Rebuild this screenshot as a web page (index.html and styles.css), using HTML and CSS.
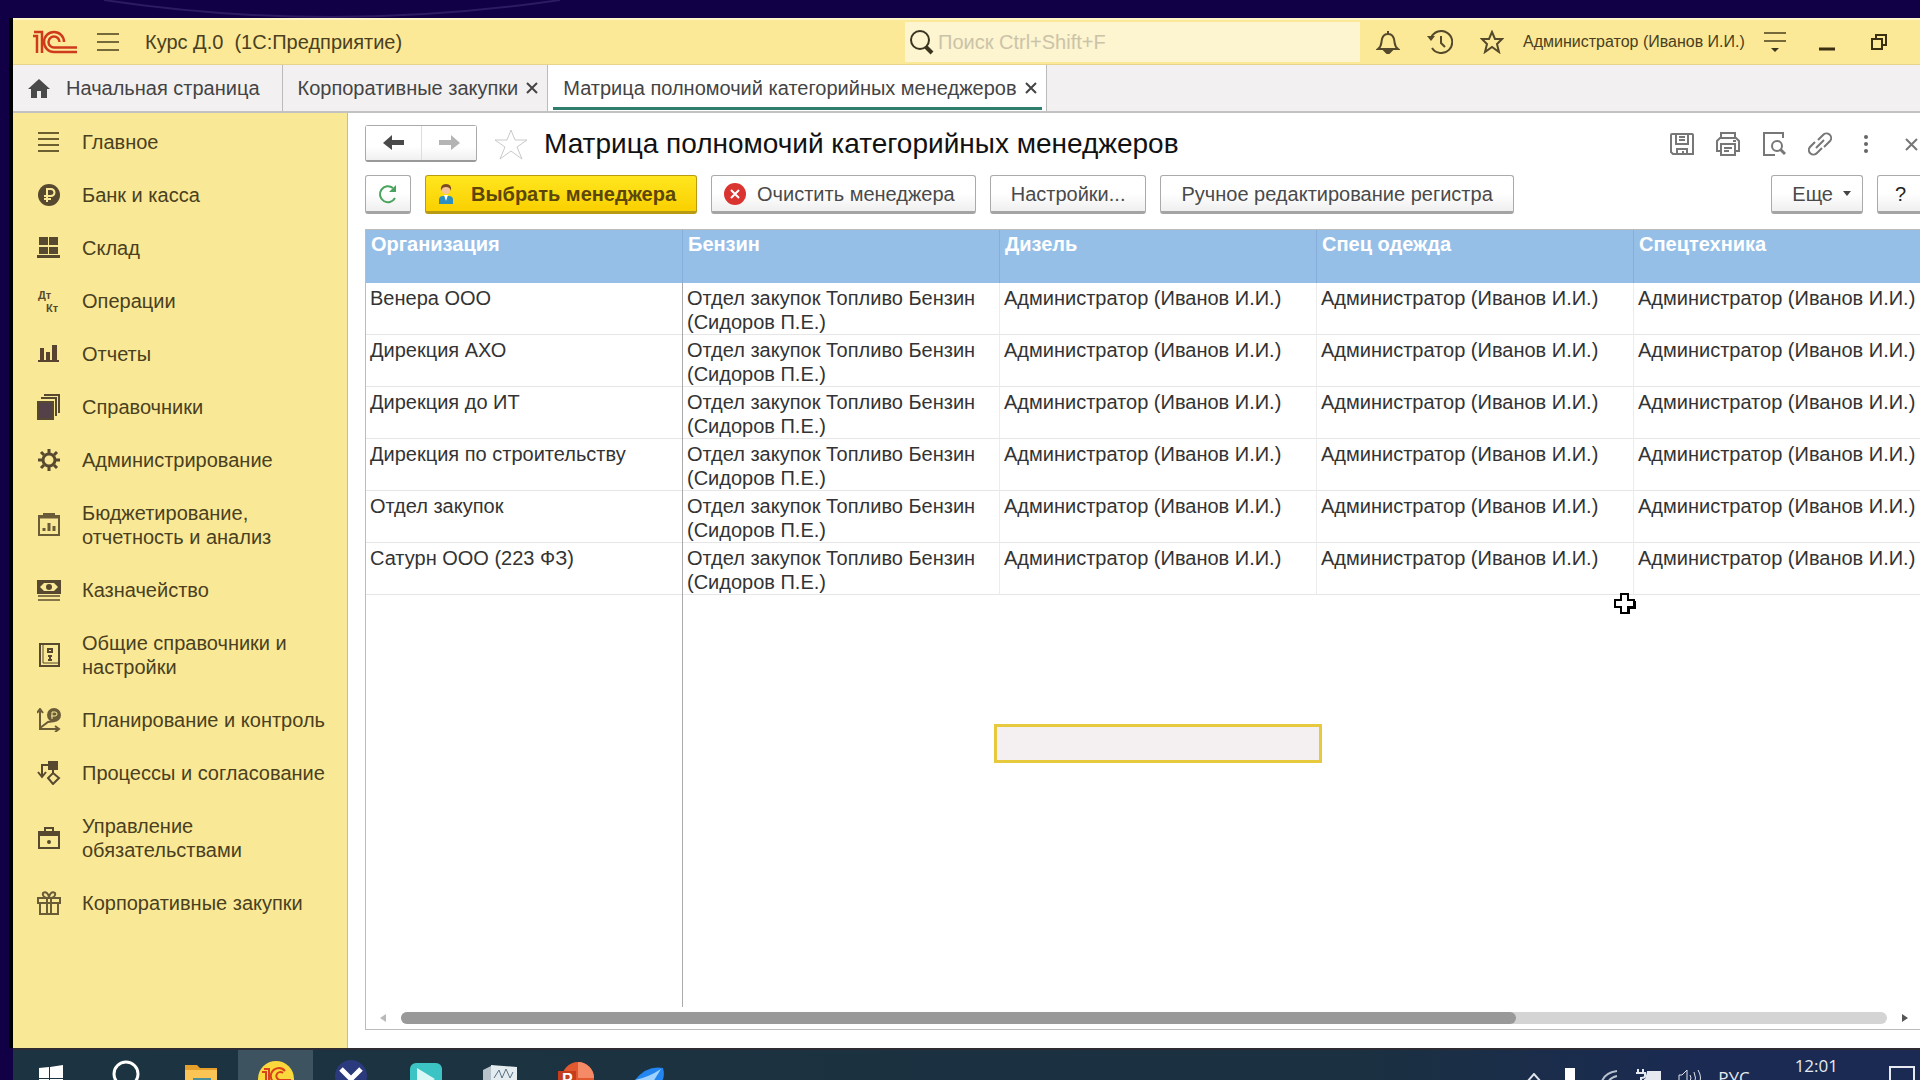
FILE: index.html
```html
<!DOCTYPE html>
<html lang="ru">
<head>
  <meta charset="UTF-8">
  <meta name="viewport" content="width=device-width, initial-scale=1.0">
  <title>Матрица полномочий категорийных менеджеров</title>
  <link rel="stylesheet" href="styles.css">
</head>
<body>

  <svg class="backdrop" width="700" height="18" viewBox="0 0 700 18" fill="none" stroke="#2c1a63" stroke-width="2">
    <path d="M104 0Q330 34 560 0"/>
  </svg>

  <div class="window">

    <header class="titlebar">
      <svg class="logo" width="44" height="24" viewBox="0 0 44 24" fill="none" stroke="#cf3a1c" stroke-width="2.5">
        <path d="M0 6H4V23M1 2H9V23"/>
        <path d="M44 22H21A10 10 0 1 1 31 12"/>
        <path d="M44 17.500H21A5.500 5.500 0 1 1 26.500 12"/>
      </svg>
      <button class="icon-btn menu-btn" aria-label="Меню">
        <svg width="22" height="20" viewBox="0 0 22 20" stroke="#776a3a" stroke-width="2"><path d="M0 2H22M0 10H22M0 18H22"/></svg>
      </button>
      <div class="app-title">Курс Д.0&nbsp; (1С:Предприятие)</div>

      <label class="search">
        <svg width="25" height="25" viewBox="0 0 25 25" fill="none" stroke="#3b3520"><circle cx="11" cy="10" r="9" stroke-width="2"/><path d="M17 17L23 23" stroke-width="4"/></svg>
        <input type="text" placeholder="Поиск Ctrl+Shift+F" aria-label="Поиск">
      </label>

      <div class="title-tools">
        <button class="icon-btn" aria-label="Уведомления">
          <svg width="24" height="24" viewBox="0 0 24 24" fill="none" stroke="#54492a" stroke-width="2"><path d="M12 1V4M2 19C6 16 5 13 6 9C7 5 9 4 12 4S17 5 18 9C19 13 18 16 22 19Z"/><path d="M9 21H15L12 24Z" fill="#54492a"/></svg>
        </button>
        <button class="icon-btn" aria-label="История">
          <svg width="26" height="24" viewBox="0 0 26 24" fill="none" stroke="#54492a" stroke-width="2"><path d="M4 8A11 11 0 1 1 5 18M14 6V13L18 17"/><path d="M0 6L8 6L4 11Z" fill="#54492a" stroke="none"/></svg>
        </button>
        <button class="icon-btn" aria-label="Избранное">
          <svg width="24" height="24" viewBox="0 0 24 24" fill="none" stroke="#54492a" stroke-width="2"><path d="M12 2L15 9H22L17 14L19 22L12 17L5 22L7 14L2 9H9Z"/></svg>
        </button>
        <a class="user" href="#">Администратор (Иванов И.И.)</a>
        <button class="icon-btn service" aria-label="Сервис">
          <svg width="22" height="22" viewBox="0 0 22 22" stroke="#776a3a" stroke-width="2"><path d="M0 2H22M0 10H22"/><path d="M7 17H15L11 21Z" fill="#3b3520" stroke="none"/></svg>
        </button>
        <button class="icon-btn minimize" aria-label="Свернуть">
          <svg width="16" height="20" viewBox="0 0 16 20" stroke="#3b2f12" stroke-width="3"><path d="M0 17H16"/></svg>
        </button>
        <button class="icon-btn restore" aria-label="Восстановить">
          <svg width="16" height="16" viewBox="0 0 16 16" fill="none" stroke="#3b2f12" stroke-width="2"><path d="M1 5H11V15H1ZM5 5V1H15V11H11"/></svg>
        </button>
      </div>
    </header>

    <nav class="tabs">
      <a class="tab home" href="#">
        <svg width="22" height="19" viewBox="0 0 22 19" fill="#4a4a4a"><path d="M11 0L22 10H19V19H13V12H9V19H3V10H0Z"/></svg>
        Начальная страница
      </a>
      <a class="tab" href="#">Корпоративные закупки
        <svg width="12" height="12" viewBox="0 0 12 12" stroke="#444" stroke-width="2"><path d="M1 1L11 11M11 1L1 11"/></svg>
      </a>
      <a class="tab active" href="#">Матрица полномочий категорийных менеджеров
        <svg width="12" height="12" viewBox="0 0 12 12" stroke="#444" stroke-width="2"><path d="M1 1L11 11M11 1L1 11"/></svg>
      </a>
    </nav>

    <div class="workspace">
      <nav class="sidebar">
        <a href="#">
          <svg width="24" height="24" viewBox="0 0 24 24" stroke="#6b5f30" stroke-width="2"><path d="M1 3H22M1 9H22M1 15H22M1 21H22"/></svg>
          <span>Главное</span>
        </a>
        <a href="#">
          <svg width="24" height="24" viewBox="0 0 24 24" fill="none"><circle cx="12" cy="12" r="11" fill="#57492f"/><path d="M10 19V6H14A3 3 0 0 1 14 13H7M7 16H14" stroke="#f9e997" stroke-width="2"/></svg>
          <span>Банк и касса</span>
        </a>
        <a href="#">
          <svg width="24" height="24" viewBox="0 0 24 24" fill="#57492f"><path d="M2 1H11V9H2ZM12 1H21V9H12ZM2 11H11V18H2ZM12 11H21V18H12ZM0 19H23V22H0Z"/></svg>
          <span>Склад</span>
        </a>
        <a href="#">
          <svg class="dtkt" width="24" height="24" viewBox="0 0 24 24" fill="#57492f"><text x="1" y="10">Дт</text><text x="9" y="23">Кт</text></svg>
          <span>Операции</span>
        </a>
        <a href="#">
          <svg width="24" height="24" viewBox="0 0 24 24" fill="#57432f"><path d="M1 18H22V20H1ZM3 6H7V18H3ZM9 10H13V18H9ZM15 3H20V18H15Z"/></svg>
          <span>Отчеты</span>
        </a>
        <a href="#">
          <svg width="24" height="26" viewBox="0 0 24 26" fill="none" stroke="#57492f" stroke-width="2"><path d="M1 8H16V25H1Z" fill="#544048"/><path d="M4 4H19V22M7 1H22V19"/></svg>
          <span>Справочники</span>
        </a>
        <a href="#">
          <svg width="24" height="24" viewBox="0 0 24 24" fill="none" stroke="#57492f"><circle cx="12" cy="12" r="6" stroke-width="3"/><path d="M12 1V5M12 19V23M1 12H5M19 12H23M4 4L7 7M17 17L20 20M4 20L7 17M17 7L20 4" stroke-width="3"/></svg>
          <span>Администрирование</span>
        </a>
        <a href="#">
          <svg width="24" height="24" viewBox="0 0 24 24" fill="none" stroke="#6b5c38" stroke-width="2"><path d="M2 3H22V22H2Z"/><path d="M1 4H23" stroke-width="3"/><path d="M6 1H18M7 18V15M12 18V10M17 18V13" stroke-width="3"/></svg>
          <span>Бюджетирование, отчетность и анализ</span>
        </a>
        <a href="#">
          <svg width="24" height="24" viewBox="0 0 24 24" fill="none" stroke="#57492f" stroke-width="2"><path d="M1 3H23V15H1Z" fill="#57492f"/><path d="M7 5H17L21 9L17 13H7L3 9Z" fill="#f9e997" stroke="none"/><circle cx="12" cy="9" r="3" fill="#57492f" stroke="none"/><path d="M1 18H23M1 22H23" stroke="#85764a"/></svg>
          <span>Казначейство</span>
        </a>
        <a href="#">
          <svg width="24" height="24" viewBox="0 0 24 24" fill="none" stroke="#57492f" stroke-width="2"><path d="M3 1H22V23H3Z"/><path d="M6 1V20H22" stroke-width="1"/><path d="M11 6H15V9H11ZM11 13H15M13 13V17M11 17H15"/></svg>
          <span>Общие справочники и настройки</span>
        </a>
        <a href="#">
          <svg width="24" height="24" viewBox="0 0 24 24" fill="none" stroke="#6b5c38" stroke-width="2"><path d="M3 22V3M0 5L3 1L6 5M2 21H21M18 18L22 21L18 24M3 20L11 14L18 13"/><circle cx="17" cy="7" r="6" fill="#6b5c38"/><path d="M15 11V4H18A2 2 0 0 1 18 8H14" stroke="#f9e997" stroke-width="1"/></svg>
          <span>Планирование и контроль</span>
        </a>
        <a href="#">
          <svg width="24" height="24" viewBox="0 0 24 24" fill="none" stroke="#57492f" stroke-width="2"><path d="M12 1H20V8H12Z" fill="#57492f"/><path d="M12 4H5V15M1 11L5 16L9 11M16 8V12M16 12L22 17L16 23L11 17Z"/></svg>
          <span>Процессы и согласование</span>
        </a>
        <a href="#">
          <svg width="24" height="24" viewBox="0 0 24 24" fill="none" stroke="#57492f" stroke-width="2"><path d="M2 6H22V22H2Z"/><path d="M1 8H23" stroke-width="4"/><path d="M8 5V2H16V5"/><circle cx="12" cy="16" r="1"/></svg>
          <span>Управление обязательствами</span>
        </a>
        <a href="#">
          <svg width="24" height="24" viewBox="0 0 24 24" fill="none" stroke="#6b5c38" stroke-width="2"><path d="M1 7H23V12H1ZM3 12V23H21V12M10 7V23M14 7V23M12 7C9 7 5 6 6 2C9 0 12 3 12 7C12 3 15 0 18 2C19 6 15 7 12 7"/></svg>
          <span>Корпоративные закупки</span>
        </a>
      </nav>

      <main class="content">
        <div class="form-head">
          <div class="history">
            <button aria-label="Назад"><svg width="22" height="16" viewBox="0 0 22 16" fill="#4a4a4a"><path d="M9 0V5H21V10H9V15L0 8Z"/></svg></button>
            <button aria-label="Вперед"><svg width="22" height="16" viewBox="0 0 22 16" fill="#b4b4b4"><path d="M13 0V5H1V10H13V15L22 8Z"/></svg></button>
          </div>
          <button class="icon-btn fav" aria-label="В избранное">
            <svg width="36" height="32" viewBox="0 0 36 32" fill="none" stroke="#c9c9c9" stroke-width="1"><path d="M18 2L22 12H34L24 19L29 31L18 23L7 31L12 19L2 12H14Z"/></svg>
          </button>
          <h1>Матрица полномочий категорийных менеджеров</h1>
          <div class="form-tools">
            <button class="icon-btn" aria-label="Сохранить"><svg width="24" height="24" viewBox="0 0 24 24" fill="none" stroke="#777" stroke-width="2"><path d="M1 3Q1 2 2 2H22Q23 2 23 3V22H3L1 20Z"/><path d="M6 2V12H18V2M9 5H15M9 8H15M7 22V17H17V22M13 19V22"/></svg></button>
            <button class="icon-btn" aria-label="Печать"><svg width="24" height="24" viewBox="0 0 24 24" fill="none" stroke="#777" stroke-width="2"><path d="M5 6V1H19V6M5 19H1V9L4 6H20L23 9V19H19M5 12H19V23H5ZM8 16H16M8 19H13M17 9H20"/></svg></button>
            <button class="icon-btn" aria-label="Просмотр"><svg width="24" height="24" viewBox="0 0 24 24" fill="none" stroke="#777" stroke-width="2"><path d="M21 6V1H2V23H13"/><circle cx="15" cy="14" r="5"/><path d="M18 17L23 22" stroke-width="3"/></svg></button>
            <button class="icon-btn" aria-label="Ссылка"><svg width="24" height="24" viewBox="0 0 24 24" fill="none" stroke="#777" stroke-width="2"><path d="M8 16L16 8M10 8L15 3A4 4 0 0 1 22 9L16 15M14 16L9 21A4 4 0 0 1 2 15L7 10"/></svg></button>
            <button class="icon-btn" aria-label="Ещё действия"><svg width="24" height="24" viewBox="0 0 24 24" fill="#666"><circle cx="12" cy="5" r="2"/><circle cx="12" cy="12" r="2"/><circle cx="12" cy="19" r="2"/></svg></button>
            <button class="icon-btn" aria-label="Закрыть"><svg width="24" height="24" viewBox="0 0 24 24" stroke="#777" stroke-width="2"><path d="M6 7L17 18M17 7L6 18"/></svg></button>
          </div>
        </div>

        <div class="toolbar">
          <button class="btn square" aria-label="Обновить">
            <svg width="20" height="20" viewBox="0 0 20 20" fill="none" stroke="#4aa35c" stroke-width="2"><path d="M17 14A8 8 0 1 1 15 4"/><path d="M18 1V8H11Z" fill="#4aa35c" stroke="none"/></svg>
          </button>
          <button class="btn primary">
            <svg width="16" height="22" viewBox="0 0 16 22"><path d="M1 21V17Q1 13 5 13H11Q15 13 15 17V21Z" fill="#2b8fc0"/><path d="M6 12H10L8 18Z" fill="#fff"/><circle cx="8" cy="7" r="4" fill="#f6c49a"/><path d="M3 8Q2 1 8 1T13 8Q12 4 8 4T3 8Z" fill="#7a4a22"/></svg>
            Выбрать менеджера
          </button>
          <button class="btn clear">
            <svg width="24" height="24" viewBox="0 0 24 24"><circle cx="12" cy="12" r="11" fill="#d9342f"/><path d="M8 8L16 16M16 8L8 16" stroke="#fff" stroke-width="2"/></svg>
            Очистить менеджера
          </button>
          <button class="btn">Настройки...</button>
          <button class="btn">Ручное редактирование регистра</button>
          <button class="btn more">Еще
            <svg width="8" height="5" viewBox="0 0 8 5" fill="#444"><path d="M0 0H8L4 5Z"/></svg>
          </button>
          <button class="btn help">?</button>
        </div>

        <div class="sheet">
          <div class="sheet-view">
            <table>
              <thead>
                <tr><th>Организация</th><th>Бензин</th><th>Дизель</th><th>Спец одежда</th><th>Спецтехника</th></tr>
              </thead>
              <tbody>
                <tr><td>Венера ООО</td><td>Отдел закупок Топливо Бензин (Сидоров П.Е.)</td><td>Администратор (Иванов И.И.)</td><td>Администратор (Иванов И.И.)</td><td>Администратор (Иванов И.И.)</td></tr>
                <tr><td>Дирекция АХО</td><td>Отдел закупок Топливо Бензин (Сидоров П.Е.)</td><td>Администратор (Иванов И.И.)</td><td>Администратор (Иванов И.И.)</td><td>Администратор (Иванов И.И.)</td></tr>
                <tr><td>Дирекция до ИТ</td><td>Отдел закупок Топливо Бензин (Сидоров П.Е.)</td><td>Администратор (Иванов И.И.)</td><td>Администратор (Иванов И.И.)</td><td>Администратор (Иванов И.И.)</td></tr>
                <tr><td>Дирекция по строительству</td><td>Отдел закупок Топливо Бензин (Сидоров П.Е.)</td><td>Администратор (Иванов И.И.)</td><td>Администратор (Иванов И.И.)</td><td>Администратор (Иванов И.И.)</td></tr>
                <tr><td>Отдел закупок</td><td>Отдел закупок Топливо Бензин (Сидоров П.Е.)</td><td>Администратор (Иванов И.И.)</td><td>Администратор (Иванов И.И.)</td><td>Администратор (Иванов И.И.)</td></tr>
                <tr><td>Сатурн ООО (223 ФЗ)</td><td>Отдел закупок Топливо Бензин (Сидоров П.Е.)</td><td>Администратор (Иванов И.И.)</td><td>Администратор (Иванов И.И.)</td><td>Администратор (Иванов И.И.)</td></tr>
              </tbody>
            </table>
            <div class="selected-cell"></div>
            <svg class="pointer" width="24" height="24" viewBox="0 0 24 24" fill="#fff" stroke="#000" stroke-width="2"><path d="M8 2H15V8H21V15H15V21H8V15H2V8H8Z"/><path d="M16 22V16H22V9" fill="none"/></svg>
          </div>
          <div class="scrollbar">
            <svg width="6" height="8" viewBox="0 0 6 8" fill="#b9b9b9"><path d="M6 0V8L0 4Z"/></svg>
            <div class="track"><div class="thumb"></div></div>
            <svg width="6" height="8" viewBox="0 0 6 8" fill="#555"><path d="M0 0V8L6 4Z"/></svg>
          </div>
        </div>
      </main>
    </div>
  </div>

  <footer class="taskbar">
    <button class="task" aria-label="Пуск"><svg width="40" height="40" viewBox="0 0 40 40" fill="#fff"><path d="M8 8L18 7V18H8ZM19 7L32 5V18H19ZM8 19H18V30L8 29ZM19 19H32V32L19 30Z"/></svg></button>
    <button class="task" aria-label="Поиск"><svg width="40" height="40" viewBox="0 0 40 40" fill="none" stroke="#fff" stroke-width="3"><circle cx="20" cy="14" r="12"/></svg></button>
    <button class="task" aria-label="Проводник"><svg width="40" height="40" viewBox="0 0 40 40"><path d="M4 5H16L19 8H36V30H4Z" fill="#e5a02c"/><path d="M4 10H36V30H4Z" fill="#fbc555"/><path d="M12 18H30V30H12Z" fill="#4b8f9a"/></svg></button>
    <button class="task current" aria-label="1С:Предприятие"><svg width="40" height="40" viewBox="0 0 40 40"><circle cx="20" cy="19" r="18" fill="#fbd93c"/><path d="M6 12H10V24M8 9H13V24M35 24H24A8 8 0 1 1 29 11M35 20H24A4 4 0 1 1 27 13" fill="none" stroke="#d9421c" stroke-width="2"/></svg></button>
    <button class="task" aria-label="Помощник"><svg width="40" height="40" viewBox="0 0 40 40"><circle cx="20" cy="16" r="16" fill="#2b3a7c"/><path d="M10 9L20 19L30 9" fill="none" stroke="#fff" stroke-width="5"/></svg></button>
    <button class="task" aria-label="Плеер"><svg width="40" height="40" viewBox="0 0 40 40"><rect x="4" y="3" width="32" height="32" rx="6" fill="#3cc4c4"/><path d="M11 8L29 19L11 30Z" fill="#d9f7f4"/></svg></button>
    <button class="task" aria-label="Монитор"><svg width="40" height="40" viewBox="0 0 40 40"><path d="M2 10L12 5V36H2Z" fill="#b7c3cb"/><path d="M10 5L36 7V34L10 32Z" fill="#e4ecf0"/><path d="M13 18L18 10L21 18L25 9L29 18L32 12" fill="none" stroke="#587387" stroke-width="1"/></svg></button>
    <button class="task" aria-label="PowerPoint"><svg class="ppt" width="40" height="40" viewBox="0 0 40 40"><circle cx="22" cy="18" r="16" fill="#e2582f"/><path d="M22 2A16 16 0 0 1 38 18H22Z" fill="#f58a66"/><rect x="2" y="11" width="18" height="18" fill="#c43e1c"/><text x="6" y="25" fill="#fff">P</text></svg></button>
    <button class="task" aria-label="Почта"><svg width="40" height="40" viewBox="0 0 40 40"><path d="M4 20Q16 5 32 8Q36 22 22 30Z" fill="#2385f0"/><path d="M4 20Q18 17 30 9L22 22Z" fill="#9fd2ff"/></svg></button>

    <div class="tray">
      <svg width="16" height="10" viewBox="0 0 16 10" fill="none" stroke="#dfe3ea" stroke-width="2"><path d="M1 9L8 1L15 9"/></svg>
      <svg class="mic" width="16" height="20" viewBox="0 0 16 20" fill="#fff"><path d="M3 0H13V14H16L8 20L0 14H3Z"/></svg>
      <svg width="20" height="16" viewBox="0 0 20 16" fill="none" stroke="#b9c2cf" stroke-width="2"><path d="M1 16Q2 3 17 1M7 16Q8 8 17 6M12 16Q13 12 17 11"/></svg>
      <svg width="26" height="18" viewBox="0 0 26 18" fill="none" stroke="#e6eaf0" stroke-width="2"><path d="M2 0V3M7 0V3M0 4H9V7Q9 9 5 9V16"/><path d="M11 3H24V14H9V10" fill="#e6eaf0"/></svg>
      <svg width="24" height="18" viewBox="0 0 24 18" fill="none" stroke="#dfe3ea" stroke-width="1"><path d="M1 6H4L9 1V17L4 12H1ZM12 6Q14 9 12 12M16 3Q19 9 16 15M20 1Q25 9 20 17"/></svg>
      <span class="lang">РУС</span>
      <time>12:01</time>
      <svg class="notes" width="26" height="24" viewBox="0 0 26 24" fill="none" stroke="#e6eaf0" stroke-width="2"><path d="M1 1H25V19H17L13 23V19H1Z"/></svg>
    </div>
  </footer>

</body>
</html>
```
FILE: styles.css
```css
* {
  box-sizing: border-box;
}
body {
  margin: 0;
  height: 100vh;
  padding: 18px 0 0 9px;
  display: flex;
  flex-direction: column;
  overflow: hidden;
  background: #120046;
  font-family: "Liberation Sans", Arial, sans-serif;
  font-size: 20px;
  line-height: 24px;
  color: #333;
}
a {
  color: inherit;
  text-decoration: none;
}
button {
  font: inherit;
  color: inherit;
}
svg {
  display: block;
  flex: none;
}
.backdrop {
  position: absolute;
  top: 0;
  left: 0;
}

/* окно программы уходит за правый край экрана */
.window {
  flex: 1;
  min-height: 0;
  margin-right: -29px;
  border-left: 4px solid #000;
  background: #fff;
  display: flex;
  flex-direction: column;
}
.icon-btn {
  padding: 0;
  border: 0;
  background: none;
  display: flex;
  align-items: center;
  justify-content: center;
}

/* заголовок окна */
.titlebar {
  height: 47px;
  padding: 0 30px 0 20px;
  border-top: 2px solid #fff6c8;
  border-bottom: 1px solid #e6d68c;
  background: #fbe998;
  display: flex;
  align-items: center;
  color: #4a4020;
}
.menu-btn {
  margin: 0 26px 0 20px;
}
.search {
  width: 455px;
  height: 40px;
  margin-left: auto;
  padding-left: 4px;
  background: #fdf4d0;
  display: flex;
  align-items: center;
  gap: 4px;
}
.search input {
  flex: 1;
  min-width: 0;
  border: 0;
  padding: 0;
  background: none;
  font: inherit;
}
.search input::placeholder {
  color: #cbc3a8;
  opacity: 1;
}
.title-tools {
  display: flex;
  align-items: center;
  margin-left: 16px;
}
.title-tools .icon-btn {
  width: 24px;
  margin-right: 28px;
}
.title-tools .user {
  width: 224px;
  font-size: 16px;
  white-space: nowrap;
  margin-left: -9px;
  margin-right: 16px;
}

/* вкладки */
.tabs {
  height: 48px;
  background: #f3f0f2;
  border-bottom: 2px solid #c2c2c2;
  display: flex;
}
.tab {
  padding: 0 9px 0 15px;
  border-right: 1px solid #bbb;
  display: flex;
  align-items: center;
  gap: 8px;
  color: #444;
  white-space: nowrap;
}
.tab.home {
  gap: 16px;
  padding-right: 22px;
}
.tab.active {
  background: #fff;
  position: relative;
}
.tab.active::after {
  content: "";
  position: absolute;
  left: 5px;
  right: 4px;
  bottom: 1px;
  height: 3px;
  background: #2f7d6c;
}

.workspace {
  flex: 1;
  min-height: 0;
  display: flex;
}
.sidebar {
  width: 335px;
  flex: none;
  background: #f9e997;
  border-right: 1px solid #c9bd86;
  padding-top: 2px;
}
.sidebar a {
  display: flex;
  align-items: center;
  gap: 21px;
  padding: 15px 20px 14px 24px;
  color: #4a4020;
}
.sidebar svg {
  margin: -2px 0;
}
.dtkt {
  font-size: 11px;
  font-weight: bold;
}

.content {
  flex: 1;
  min-width: 0;
  padding: 12px 0 18px 17px;
  display: flex;
  flex-direction: column;
}
.form-head {
  display: flex;
  align-items: center;
  padding-right: 25px;
}
.history {
  display: flex;
  border: 1px solid #aaa;
  border-bottom: 2px solid #999;
  border-radius: 3px;
}
.history button {
  width: 55px;
  height: 34px;
  padding: 0;
  border: 0;
  background: linear-gradient(#fff 60%, #f0f0f0);
  display: flex;
  align-items: center;
  justify-content: center;
}
.history button + button {
  border-left: 1px solid #ddd;
}
.fav {
  margin: 0 15px 0 16px;
}
h1 {
  margin: 0;
  font-size: 28px;
  line-height: 32px;
  font-weight: normal;
  color: #111;
}
.form-tools {
  display: flex;
  gap: 22px;
  margin-left: auto;
}

/* командная панель */
.toolbar {
  display: flex;
  gap: 14px;
  margin: 13px 0 15px;
}
.btn {
  height: 39px;
  padding: 0 20px;
  border: 1px solid #aaa;
  border-bottom: 3px solid #a4a4a4;
  border-radius: 3px;
  background: linear-gradient(#fff 50%, #efefef);
  color: #4a4a4a;
  display: flex;
  align-items: center;
  gap: 10px;
  white-space: nowrap;
}
.btn.square {
  width: 46px;
  padding: 0 12px;
}
.btn.primary {
  padding-left: 12px;
  gap: 17px;
  border-color: #b89b10;
  background: linear-gradient(#ffe620, #fad000);
  color: #5c4708;
  font-weight: bold;
}
.btn.clear {
  padding-left: 11px;
}
.btn.more {
  margin-left: auto;
  padding-right: 11px;
}
.btn.help {
  width: 72px;
  padding: 0 17px;
  color: #222;
}

/* табличный документ */
.sheet {
  flex: 1;
  min-height: 0;
  border: solid #bcbcbc;
  border-width: 1px 0 1px 1px;
  display: flex;
  flex-direction: column;
}
.sheet-view {
  flex: 1;
  min-height: 0;
  overflow: hidden;
  position: relative;
}
/* граница закреплённой колонки */
.sheet-view::after {
  content: "";
  position: absolute;
  left: 316px;
  top: 53px;
  bottom: 0;
  width: 1px;
  background: #aaa;
}
table {
  width: 1585px;
  table-layout: fixed;
  border-collapse: separate;
  border-spacing: 0;
}
th {
  height: 53px;
  padding: 2px 5px;
  background: #96bfe8;
  border-right: 1px solid #86addb;
  color: #fff;
  text-align: left;
  vertical-align: top;
}
td {
  height: 52px;
  padding: 3px 0 0 4px;
  border-right: 1px solid #ececec;
  border-bottom: 1px solid #e6e6e6;
  vertical-align: top;
}
.selected-cell {
  position: absolute;
  left: 628px;
  top: 494px;
  width: 328px;
  height: 39px;
  border: 3px solid #e6c93c;
  background: #f4f0f1;
}
.pointer {
  position: absolute;
  left: 1247px;
  top: 362px;
}
.scrollbar {
  height: 22px;
  padding: 0 41px 0 14px;
  display: flex;
  align-items: center;
  gap: 15px;
}
.track {
  flex: 1;
  height: 12px;
  border-radius: 6px;
  background: #d4d4d4;
}
.thumb {
  width: 75%;
  height: 12px;
  border-radius: 6px;
  background: #999;
}

/* панель задач, нижняя часть за экраном */
.taskbar {
  height: 32px;
  margin-left: 4px;
  border-top: 2px solid #2f2b33;
  background: linear-gradient(90deg, #1c3442, #1b3040 70%, #1a2a52 88%);
  display: flex;
  overflow: hidden;
}
.task {
  flex: none;
  width: 75px;
  height: 56px;
  padding: 10px 0 0;
  border: 0;
  background: none;
  display: flex;
  justify-content: center;
  align-items: flex-start;
}
.task.current {
  background: #3d5460;
}
.ppt {
  font-size: 16px;
  font-weight: bold;
}
.tray {
  height: 56px;
  margin-left: auto;
  padding: 0 5px 0 0;
  display: flex;
  align-items: center;
  gap: 16px;
  color: #e6eaf0;
  font-family: "Open Sans", "Noto Sans", sans-serif;
  font-size: 17px;
}
.mic {
  margin: 0 6px 0 4px;
}
.tray time {
  height: 48px;
  margin: 0 35px 0 29px;
}
```
